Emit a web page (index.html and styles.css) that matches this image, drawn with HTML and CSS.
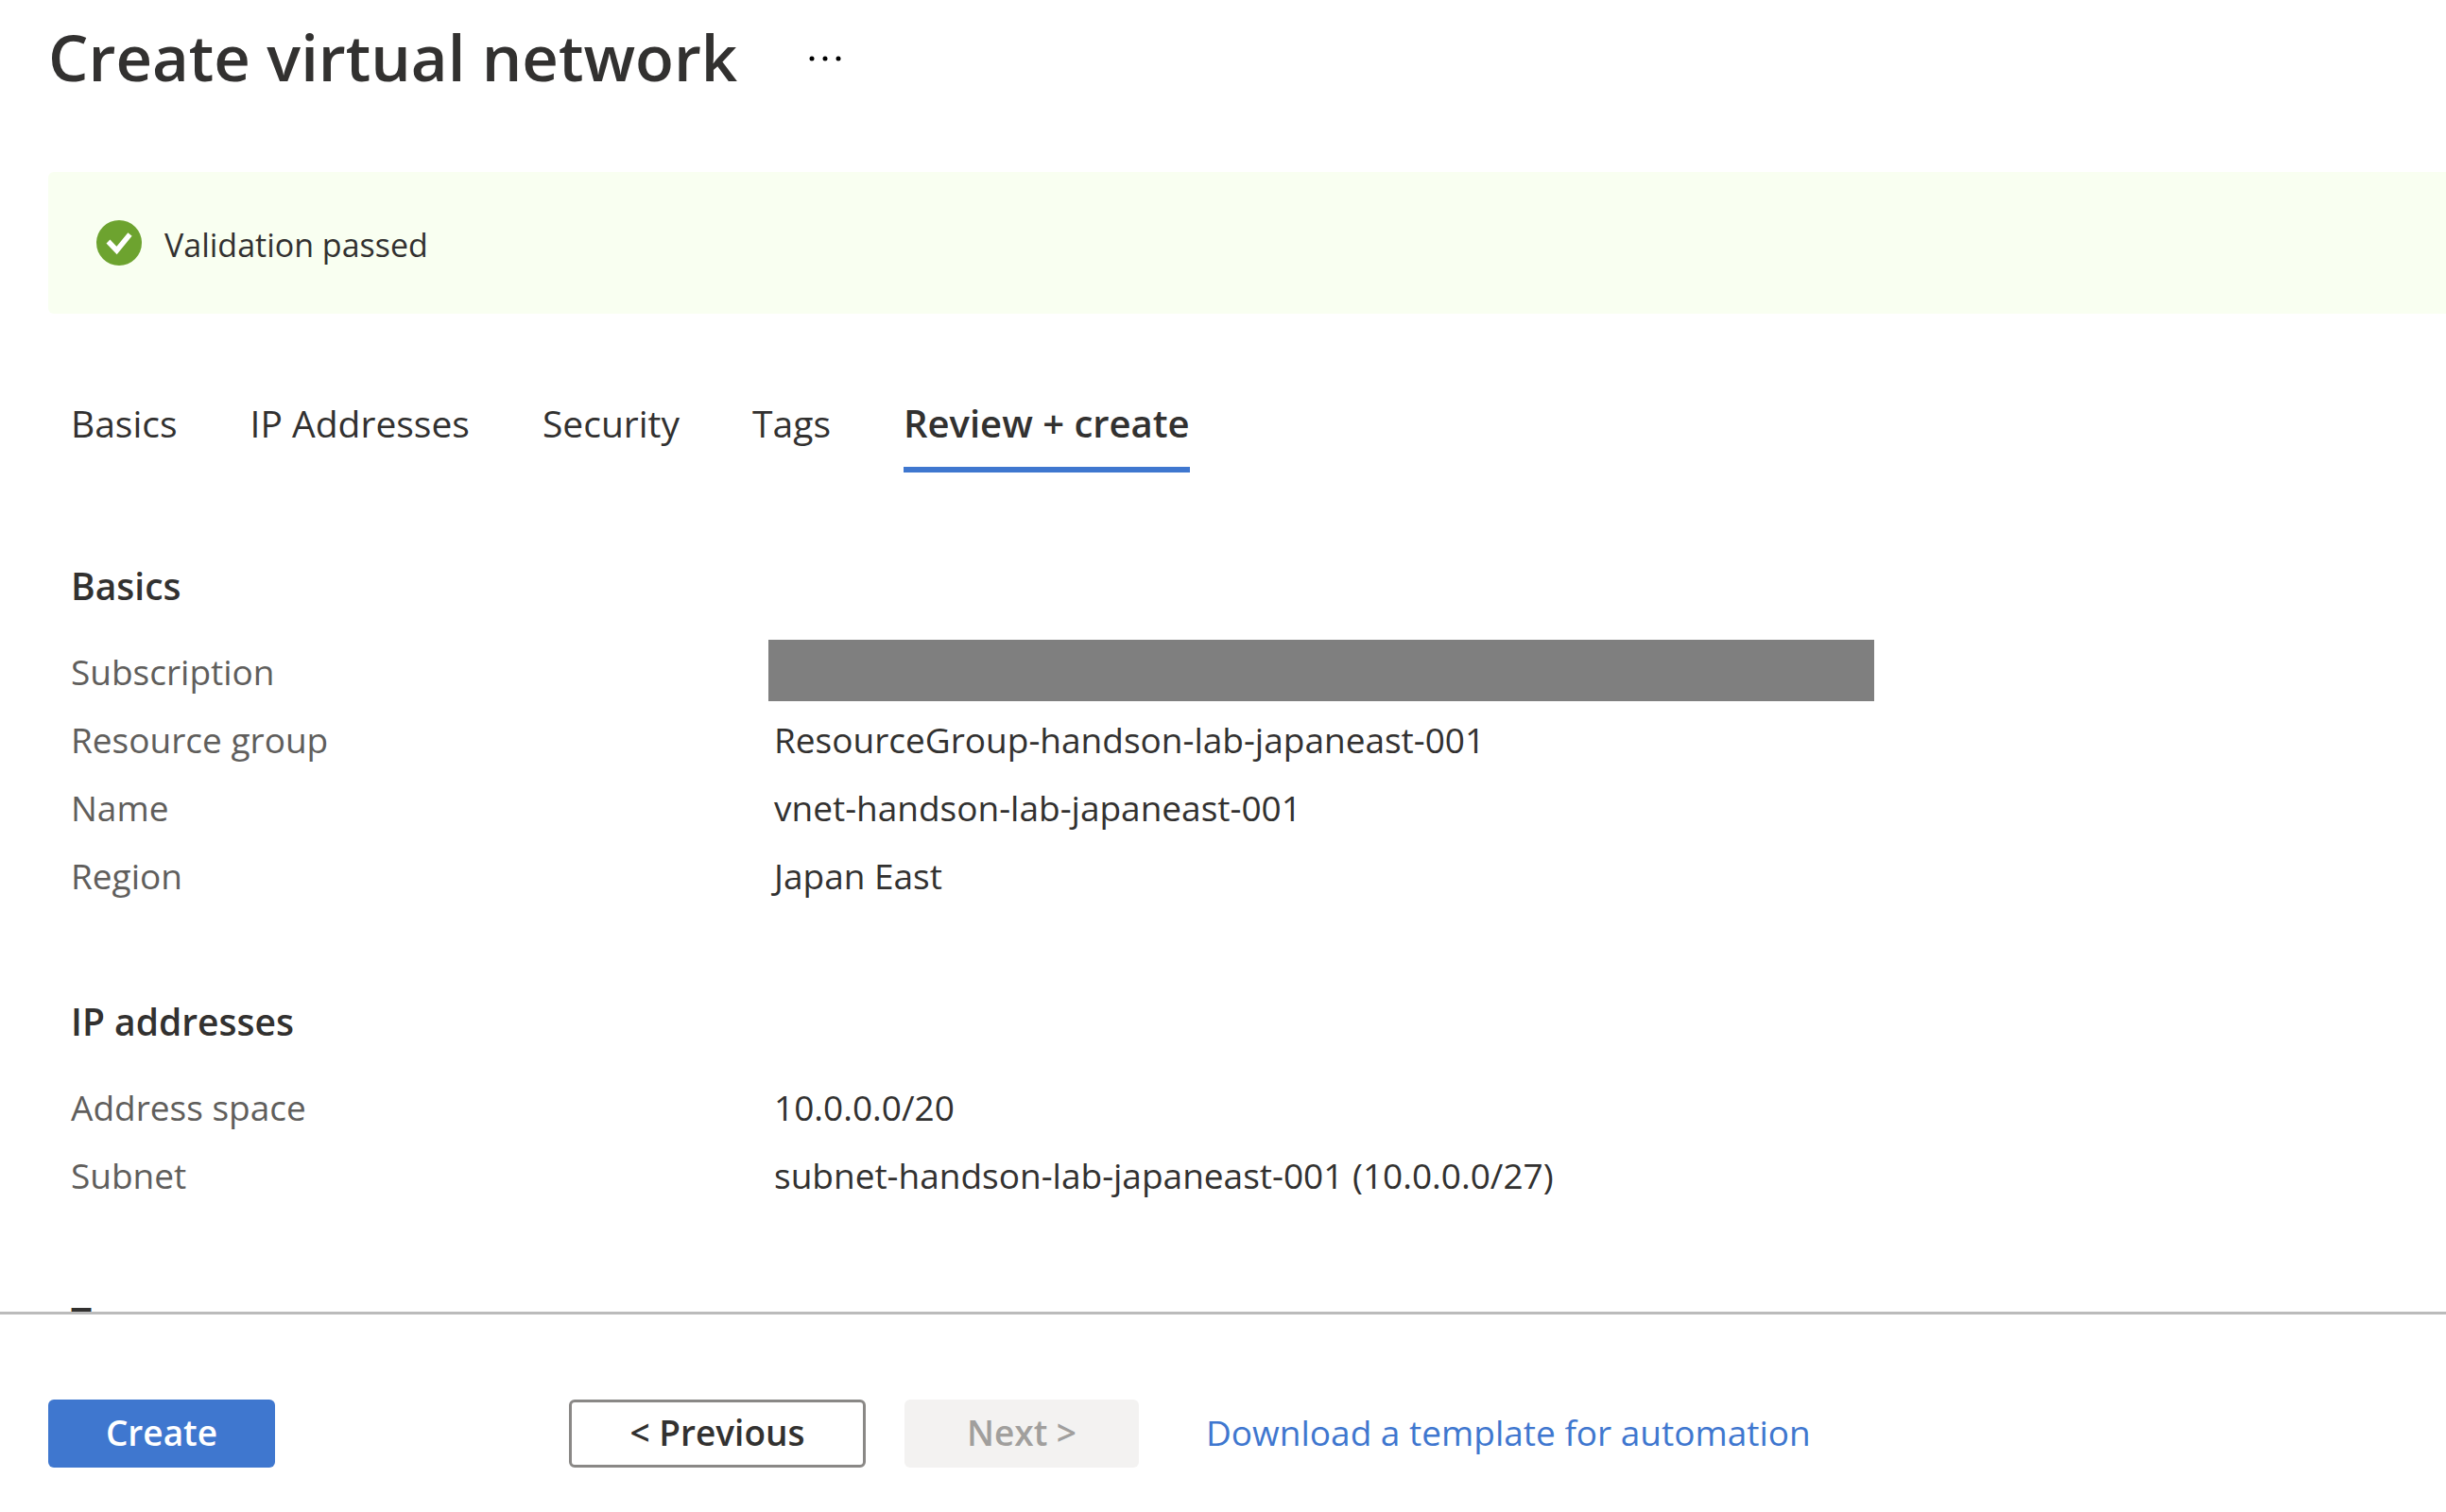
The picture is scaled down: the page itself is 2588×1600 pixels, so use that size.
FILE: index.html
```html
<!DOCTYPE html>
<html lang="en">
<head>
<meta charset="utf-8">
<title>Create virtual network</title>
<link rel="stylesheet" href="styles.css">
</head>
<body>
<main class="blade">
  <header class="blade-header">
    <h1 class="blade-title">Create virtual network</h1>
    <button class="more" type="button" aria-label="More actions">
      <svg class="more-icon" viewBox="0 0 34 6" aria-hidden="true"><circle cx="3" cy="3" r="2.5"/><circle cx="17" cy="3" r="2.5"/><circle cx="31" cy="3" r="2.5"/></svg>
    </button>
  </header>

  <div class="banner" role="status">
    <svg class="banner-icon" viewBox="0 0 48 48" aria-hidden="true"><circle cx="24" cy="24" r="24" fill="#6da32f"/><path d="M12.500 22.500L21.500 32L35.500 15" fill="none" stroke="#fff" stroke-width="5.500"/></svg>
    <span class="banner-text">Validation passed</span>
  </div>

  <nav class="tabs">
    <a class="tab" href="#basics">Basics</a>
    <a class="tab" href="#ip">IP Addresses</a>
    <a class="tab" href="#security">Security</a>
    <a class="tab" href="#tags">Tags</a>
    <a class="tab tab-active" href="#review" aria-current="page">Review + create</a>
  </nav>

  <section class="summary" id="basics">
    <h2 class="summary-title">Basics</h2>
    <dl class="fields">
      <dt>Subscription</dt><dd class="redacted"></dd>
      <dt>Resource group</dt><dd>ResourceGroup-handson-lab-japaneast-001</dd>
      <dt>Name</dt><dd>vnet-handson-lab-japaneast-001</dd>
      <dt>Region</dt><dd>Japan East</dd>
    </dl>
  </section>
  <section class="summary" id="ip">
    <h2 class="summary-title">IP addresses</h2>
    <dl class="fields">
      <dt>Address space</dt><dd>10.0.0.0/20</dd>
      <dt>Subnet</dt><dd>subnet-handson-lab-japaneast-001 (10.0.0.0/27)</dd>
    </dl>
  </section>
  <section class="summary" id="tags">
    <h2 class="summary-title">Tags</h2>
  </section>
</main>

<footer class="actions">
  <button class="button button-primary" type="button">Create</button>
  <button class="button button-previous" type="button">&lt; Previous</button>
  <button class="button button-next" type="button" disabled>Next &gt;</button>
  <a class="download" href="#template">Download a template for automation</a>
</footer>
</body>
</html>
```
FILE: styles.css
```css
* {
  box-sizing: border-box;
}

body {
  display: flex;
  flex-direction: column;
  height: 100vh;
  margin: 0;
  background: #fff;
  color: #323130;
  font-family: "Segoe UI", "Open Sans", "Noto Sans", sans-serif;
  font-size: 37px;
}

.blade {
  flex: 1;
  min-height: 0;
  overflow: hidden;
  padding: 12px 0 0 51px;
}

.blade-header {
  display: flex;
  align-items: center;
  gap: 52px;
}

.blade-title {
  margin: 0;
  font-size: 67px;
  font-weight: 600;
  line-height: 96px;
}

.more {
  display: flex;
  padding: 27px 24px 24px;
  border: 0;
  background: none;
}

.more-icon {
  width: 34px;
  height: 6px;
}

.banner {
  display: flex;
  align-items: center;
  gap: 24px;
  height: 150px;
  margin-top: 74px;
  padding-left: 51px;
  border-radius: 6px 0 0 6px;
  background: #f9fff1;
  font-size: 34px;
}

.banner-icon {
  width: 48px;
  height: 48px;
}

.banner-text {
  padding-top: 3px;
}

.tabs {
  display: flex;
  gap: 77px;
  margin-top: 88px;
  padding: 0 0 2px 24px;
}

.tab {
  padding-bottom: 18px;
  border-bottom: 6px solid transparent;
  color: inherit;
  font-size: 39px;
  line-height: 56px;
  text-decoration: none;
}

.tab-active {
  border-color: #3f77cf;
  font-size: 40px;
  font-weight: 600;
}

.summary {
  margin-top: 90px;
  padding-left: 24px;
}

.summary-title {
  margin: 0 0 27px;
  font-size: 39px;
  font-weight: 600;
  line-height: 56px;
}

.fields {
  display: grid;
  grid-template-columns: 744px 1fr;
  margin: 0;
  line-height: 72px;
}

.fields dt {
  color: #605e5c;
}

.fields dd {
  margin: 0;
}

.fields .redacted {
  max-width: 1170px;
  height: 65px;
  margin: 2px 0 5px -6px;
  background: #7f7f7f;
}

.actions {
  display: flex;
  align-items: center;
  padding: 90px 51px 47px;
  border-top: 3px solid #bbb;
}

.button {
  height: 72px;
  padding: 0 0 3px;
  border: 0;
  border-radius: 6px;
  font: inherit;
  font-weight: 600;
}

.button-primary {
  width: 240px;
  background: #3f77cf;
  color: #fff;
}

.button-previous {
  width: 314px;
  margin-left: 311px;
  border: 3px solid #8a8886;
  background: #fff;
  color: #323130;
}

.button-next {
  width: 248px;
  margin-left: 41px;
  background: #f3f2f1;
  color: #a19f9d;
}

.download {
  margin-left: 71px;
  padding-bottom: 3px;
  color: #3f77cf;
  text-decoration: none;
}
```
